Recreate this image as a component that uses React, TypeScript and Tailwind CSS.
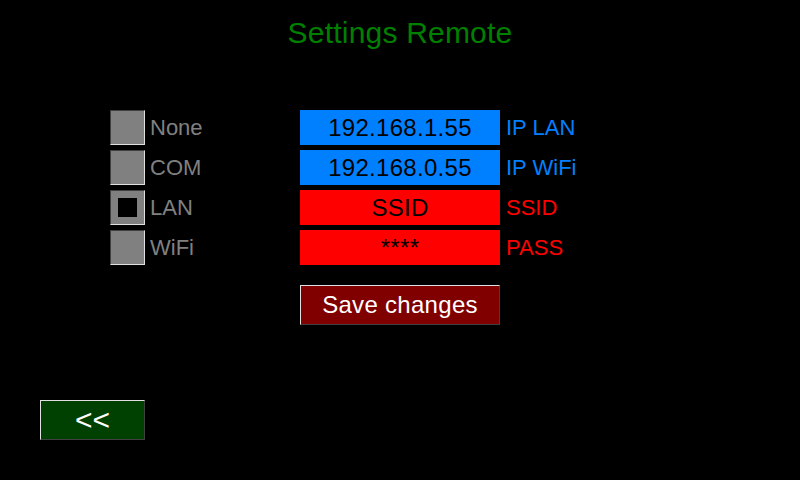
import React from "react";

const font = { fontFamily: '"Liberation Sans", Arial, sans-serif' };

function Check({ checked }: { checked?: boolean }) {
  return (
    <div className="w-[35px] h-[35px] bg-[#808080] border border-t-[#404040] border-l-[#404040] border-b-[#e0e0e0] border-r-[#e0e0e0] flex items-center justify-center">
      {checked && <div className="w-[19px] h-[19px] bg-black" />}
    </div>
  );
}

function Row({
  check,
  value,
  tag,
  color,
  checked,
}: {
  check: string;
  value: string;
  tag: string;
  color: "blue" | "red";
  checked?: boolean;
}) {
  const isBlue = color === "blue";
  return (
    <div className="flex items-center h-[35px]">
      <div className="w-[190px] flex items-center h-full">
        <Check checked={checked} />
        <span className="ml-[5px] text-[22px] leading-none text-[#808080]">{check}</span>
      </div>
      <div
        className={`w-[200px] h-full flex items-center justify-center text-[24px] leading-none tracking-[0.3px] text-black ${
          isBlue ? "bg-[#0080ff]" : "bg-[#ff0000]"
        }`}
      >
        {value}
      </div>
      <span
        className={`ml-[6px] text-[22px] leading-none ${isBlue ? "text-[#0080ff]" : "text-[#ff0000]"}`}
      >
        {tag}
      </span>
    </div>
  );
}

export default function App() {
  return (
    <div className="w-[800px] h-[480px] bg-black flex flex-col overflow-hidden" style={font}>
      <div className="h-[110px] flex justify-center">
        <div className="mt-[18px] text-[30px] leading-none tracking-[0.2px] text-[#008000] h-[30px]">Settings Remote</div>
      </div>
      <div className="pl-[110px] flex flex-col gap-[5px]">
        <Row check="None" value="192.168.1.55" tag="IP LAN" color="blue" />
        <Row check="COM" value="192.168.0.55" tag="IP WiFi" color="blue" />
        <Row check="LAN" value="SSID" tag="SSID" color="red" checked />
        <Row check="WiFi" value="****" tag="PASS" color="red" />
      </div>
      <div className="pl-[300px] mt-[20px]">
        <div className="w-[200px] h-[40px] bg-[#800000] border border-t-[#e0e0e0] border-l-[#e0e0e0] border-b-[#404040] border-r-[#404040] flex items-center justify-center text-white text-[24px] leading-none tracking-[0.3px]">
          Save changes
        </div>
      </div>
      <div className="pl-[40px] mt-[75px]">
        <div className="w-[105px] h-[40px] bg-[#004000] border border-t-[#e0e0e0] border-l-[#e0e0e0] border-b-[#404040] border-r-[#404040] flex items-center justify-center text-white text-[30px] leading-none">
          &lt;&lt;
        </div>
      </div>
    </div>
  );
}
